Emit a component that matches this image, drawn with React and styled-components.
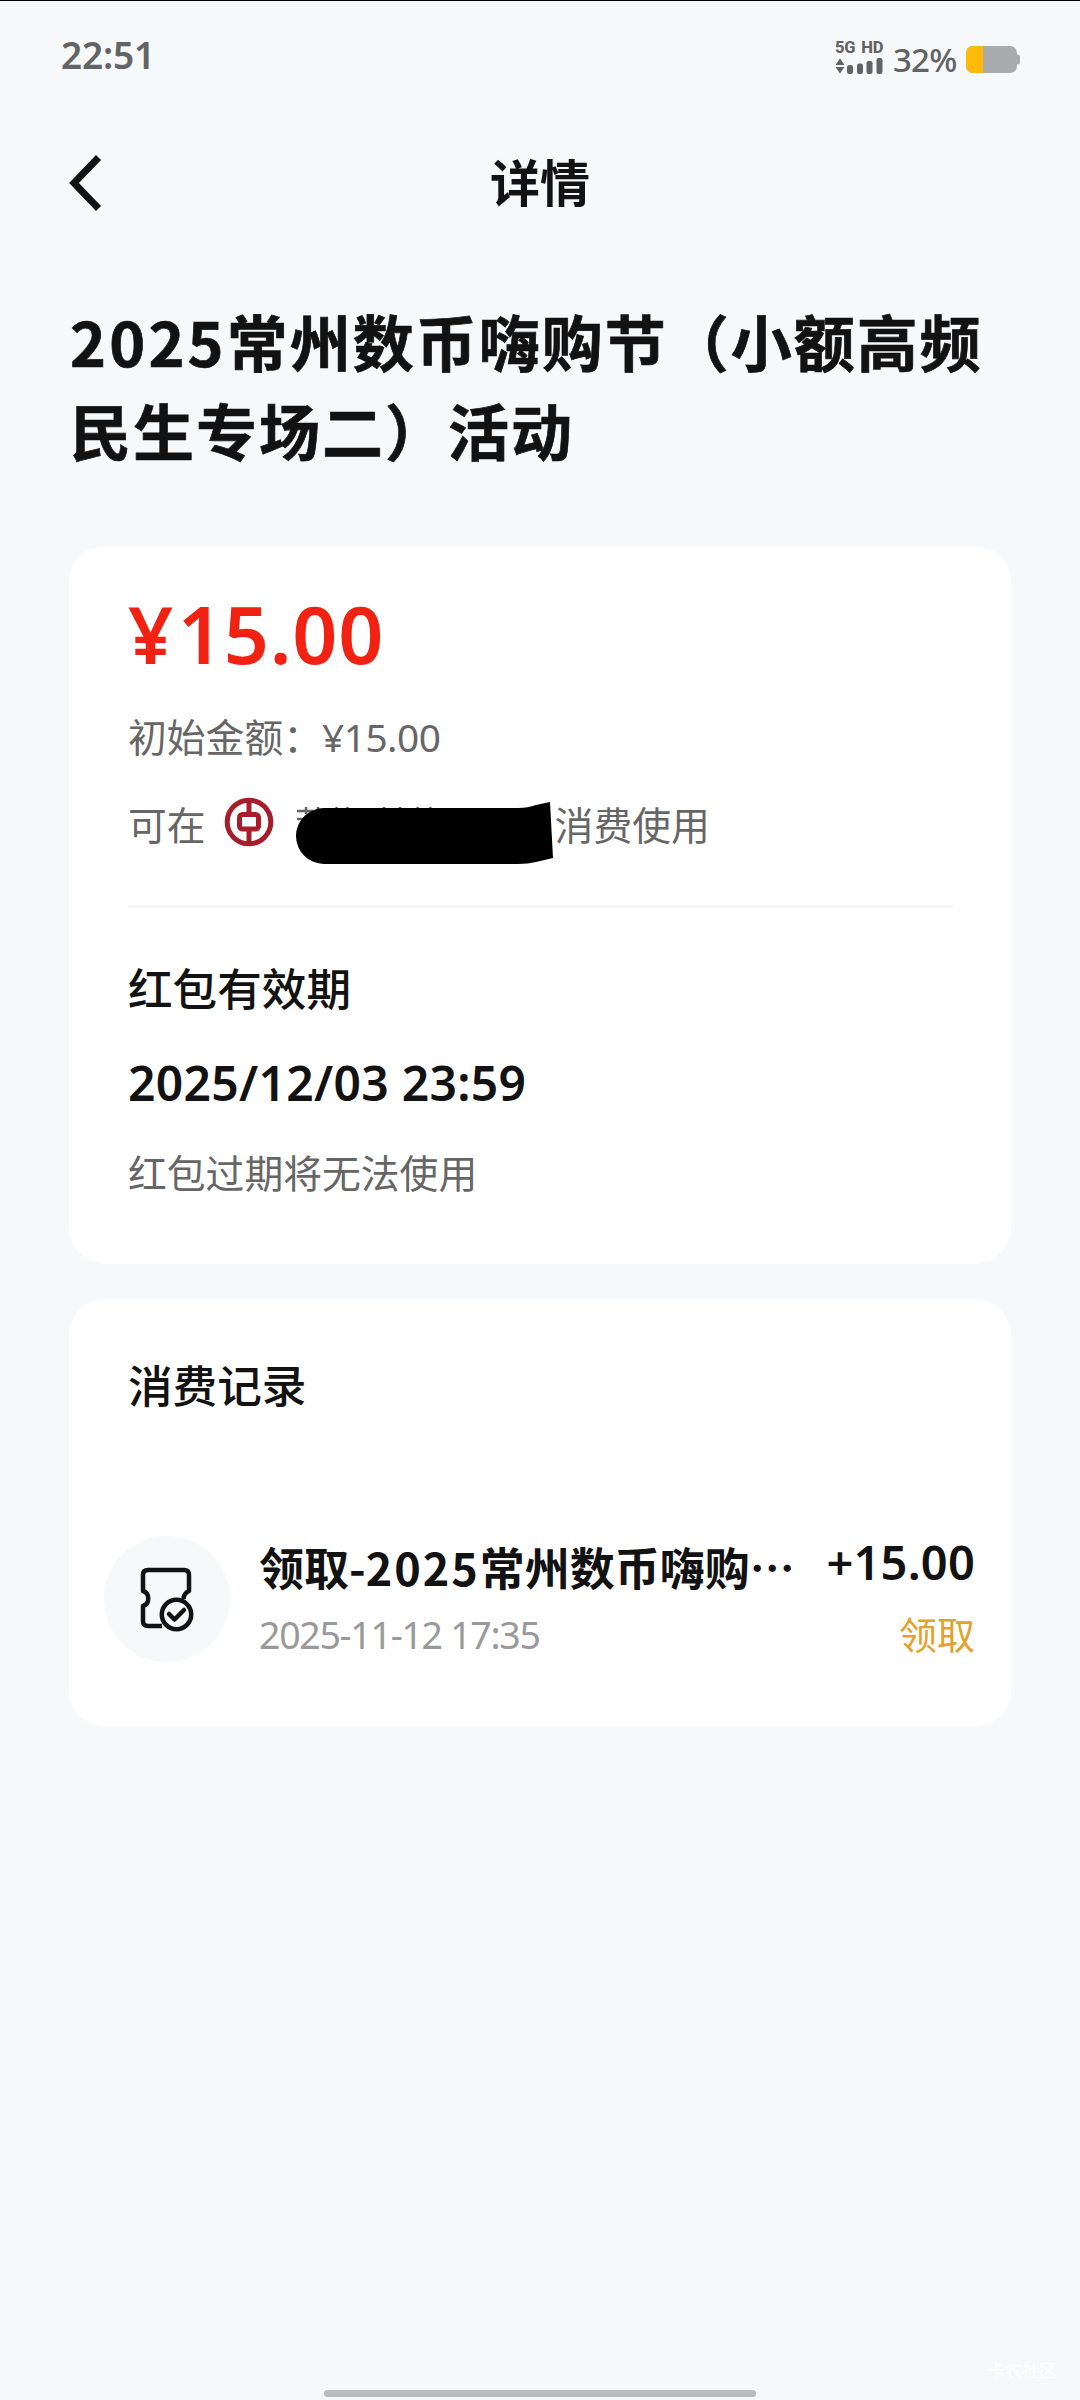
import React from 'react'
import styled, { createGlobalStyle } from 'styled-components'

const GlobalStyle = createGlobalStyle`
    * {
        box-sizing: border-box;
    }
    body {
        margin: 0;
        background-color: #f7f8fa;
    }
`
const latin = `"Noto Sans", "Noto Sans CJK SC", sans-serif`
const cjk = `"Noto Sans CJK SC", "Noto Sans", sans-serif`

const Container = styled.div`
    width: 1080px;
    height: 2400px;
    display: flex;
    flex-direction: column;
    overflow: hidden;
    border-top: 1px solid black;
    background-color: #f7f8fa;
    color: #121212;
    font-family: ${latin};
    white-space: nowrap;
`
const StatusBar = styled.div`
    height: 113px;
    padding: 0 60px 0 61px;
    display: flex;
    justify-content: space-between;
    color: #626365;
`
const Clock = styled.span`
    margin-top: 28px;
    line-height: 52px;
    font-size: 37px;
    font-weight: 600;
    letter-spacing: -0.2px;
`
const StatusRight = styled.div`
    display: flex;
    align-items: flex-start;
`
const Network = styled.div`
    width: 49px;
    margin: 38px 9px 0 0;
    display: flex;
    flex-direction: column;
`
const NetworkLabel = styled.span`
    height: 18px;
    line-height: 17px;
    font-family: Roboto, sans-serif;
    font-size: 16.5px;
    font-weight: 800;
    word-spacing: 2px;
    letter-spacing: -0.2px;
`
const Percent = styled.span`
    width: 73px;
    margin-top: 34px;
    line-height: 50px;
    font-size: 33px;
    font-weight: 500;
    letter-spacing: -0.8px;
`
const BatteryIcon = styled.svg`
    margin-top: 45px;
`
const NavBar = styled.div`
    height: 138px;
    padding: 0 67px;
    display: grid;
    grid-template-columns: 60px 1fr 60px;
    align-items: center;
`
const NavTitle = styled.h1`
    margin: 0;
    text-align: center;
    line-height: 60px;
    font-size: 50px;
    font-weight: 700;
`
const Title = styled.h2`
    height: 294px;
    margin: 0;
    padding: 44px 0 0 70px;
    font-family: ${cjk};
    font-size: 61px;
    font-weight: 700;
    line-height: 89px;
    letter-spacing: 2px;
    -webkit-text-stroke: 0.7px currentColor;
`
const Digits = styled.span`
    letter-spacing: ${props => props.$spacing};
`
const Card = styled.div`
    height: ${props => props.$height};
    margin: 0 69px 35px;
    padding: ${props => props.$pad};
    border-radius: 36px;
    background-color: white;
`
const Amount = styled.div`
    height: 100px;
    line-height: 102px;
    font-size: 79px;
    font-weight: 600;
    letter-spacing: 0.8px;
    color: #f12211;
`
const Note = styled.div`
    height: 50px;
    margin-top: ${props => props.$top};
    display: flex;
    line-height: 50px;
    font-size: 38.8px;
    color: #666;
`
const BankLogo = styled.svg`
    margin: -3px 0 0 18px;
`
const Scribble = styled.svg`
    margin: 0 1px 0 22px;
    overflow: visible;
`
const Divider = styled.div`
    height: 3px;
    margin: 55px 0 51px;
    background-color: #f6f6f7;
`
const Heading = styled.h3`
    margin: 0;
    padding-left: ${props => props.$indent || 0};
    line-height: 60px;
    font-size: 44.6px;
    font-weight: 500;
`
const ExpireDate = styled.div`
    margin-top: 34px;
    line-height: 60px;
    font-size: 48px;
    font-weight: 600;
    letter-spacing: 0.3px;
`
const Record = styled.div`
    margin-top: 120px;
    display: flex;
`
const RecordIcon = styled.div`
    width: 126px;
    height: 126px;
    margin-right: 29px;
    border-radius: 50%;
    background-color: #f7f8fa;
`
const RecordMain = styled.div`
    flex: 1;
`
const RecordTitle = styled.div`
    height: 60px;
    line-height: 62px;
    font-family: ${cjk};
    font-size: 45px;
    font-weight: 700;
`
const RecordTime = styled.div`
    margin-top: 14px;
    line-height: 50px;
    font-size: 37.5px;
    letter-spacing: -1.3px;
    color: #999;
`
const RecordSide = styled.div`
    text-align: right;
`
const RecordAmount = styled.div`
    height: 60px;
    margin-top: -4px;
    line-height: 60px;
    font-size: 47px;
    font-weight: 600;
    letter-spacing: 0.2px;
`
const RecordState = styled.div`
    margin-top: 17px;
    line-height: 50px;
    font-size: 38px;
    color: #e2a22c;
`
const Footer = styled.div`
    margin-top: auto;
    display: flex;
    flex-direction: column;
    align-items: center;
`
const Watermark = styled.span`
    align-self: flex-end;
    margin: 0 24px 7px 0;
    line-height: 24px;
    font-size: 17px;
    color: #fff;
`
const HomeBar = styled.div`
    width: 432px;
    height: 7px;
    margin-bottom: 3px;
    border-radius: 4px;
    background-color: #babbbd;
`

const bars = [
    { x: 12, y: 8 },
    { x: 22, y: 6.5 },
    { x: 31.5, y: 4 },
    { x: 41.5, y: 1 },
]

const App = () => {
  return (
    <Container>
      <GlobalStyle />
      <StatusBar>
        <Clock>22:51</Clock>
        <StatusRight>
          <Network>
            <NetworkLabel>5G HD</NetworkLabel>
            <svg width="48" height="18" fill="#626365">
              <path d="M0.500 8L5 1.500L9.500 8Z M0.500 10H9.500L5 16.500Z" />
              {bars.map(b => (
                <rect key={b.x} x={b.x} y={b.y} width="6" height={17 - b.y} rx="2.200" />
              ))}
            </svg>
          </Network>
          <Percent>32%</Percent>
          <BatteryIcon width="54" height="28">
            <rect x="0" y="0" width="51" height="27" rx="7" fill="#a9abac" />
            <rect x="49" y="8.500" width="5" height="10" rx="2.500" fill="#a9abac" />
            <path d="M7 0H17V27H7A7 7 0 0 1 0 20V7A7 7 0 0 1 7 0Z" fill="#ffb908" />
          </BatteryIcon>
        </StatusRight>
      </StatusBar>
      <NavBar>
        <svg width="36" height="56" fill="none" stroke="#121212" strokeWidth="7">
          <path d="M31.500 2.500L7 28L31.500 53.500" />
        </svg>
        <NavTitle>详情</NavTitle>
      </NavBar>
      <Title>
        <Digits $spacing="3.200px">2025</Digits>常州数币嗨购节（小额高频<br />
        民生专场二）活动
      </Title>
      <Card $height="718px" $pad="37px 58px 0 59px">
        <Amount><Digits $spacing="4.500px">¥</Digits>15.00</Amount>
        <Note $top="29px">初始金额：<Digits $spacing="-0.500px">¥15.00</Digits></Note>
        <Note $top="38px">
          可在
          <BankLogo width="50" height="50" viewBox="0 0 50 50" fill="none" stroke="#a81d2b">
            <circle cx="25" cy="25" r="21.800" strokeWidth="5" />
            <path d="M25 4V15M25 34V46" strokeWidth="5" />
            <rect x="15.500" y="17.500" width="19" height="14.500" rx="3" strokeWidth="5" />
          </BankLogo>
          <Scribble width="258" height="64">
            <path d="M1 11H17M10 7V14M1 19H8M22 7V11M41 7L39 11M51 7L53 11M88 7V11M104 7V11M122 7L120 11M134 7L136 11" stroke="#666" strokeWidth="2.500" />
            <path d="M28 8H222Q232 8 240 5L254 2L257 58L240 62Q232 64 222 64H28A28 28 0 0 1 28 8Z" fill="#000" />
          </Scribble>
          消费使用
        </Note>
        <Divider />
        <Heading>红包有效期</Heading>
        <ExpireDate>2025/12/03 23:59</ExpireDate>
        <Note $top="35px">红包过期将无法使用</Note>
      </Card>
      <Card $height="428px" $pad="57px 36px 0 35px">
        <Heading $indent="24px">消费记录</Heading>
        <Record>
          <RecordIcon>
            <svg width="126" height="126" fill="none" stroke="#121212" strokeWidth="4.500" strokeLinejoin="round">
              <path d="M58 90H44Q39 90 39 85V70C46 68 46 57 39 55V39Q39 34 44 34H80Q85 34 85 39V55Q80 57 79.500 63" />
              <circle cx="72.500" cy="78.500" r="14.700" />
              <path d="M65 78L70.500 83.500L80 74" strokeLinecap="round" />
            </svg>
          </RecordIcon>
          <RecordMain>
            <RecordTitle>领取-<Digits $spacing="2px">2025</Digits>常州数币嗨购…</RecordTitle>
            <RecordTime>2025-11-12 17:35</RecordTime>
          </RecordMain>
          <RecordSide>
            <RecordAmount>+15.00</RecordAmount>
            <RecordState>领取</RecordState>
          </RecordSide>
        </Record>
      </Card>
      <Footer>
        <Watermark>卡农社区</Watermark>
        <HomeBar />
      </Footer>
    </Container>
  )
}

export default App
